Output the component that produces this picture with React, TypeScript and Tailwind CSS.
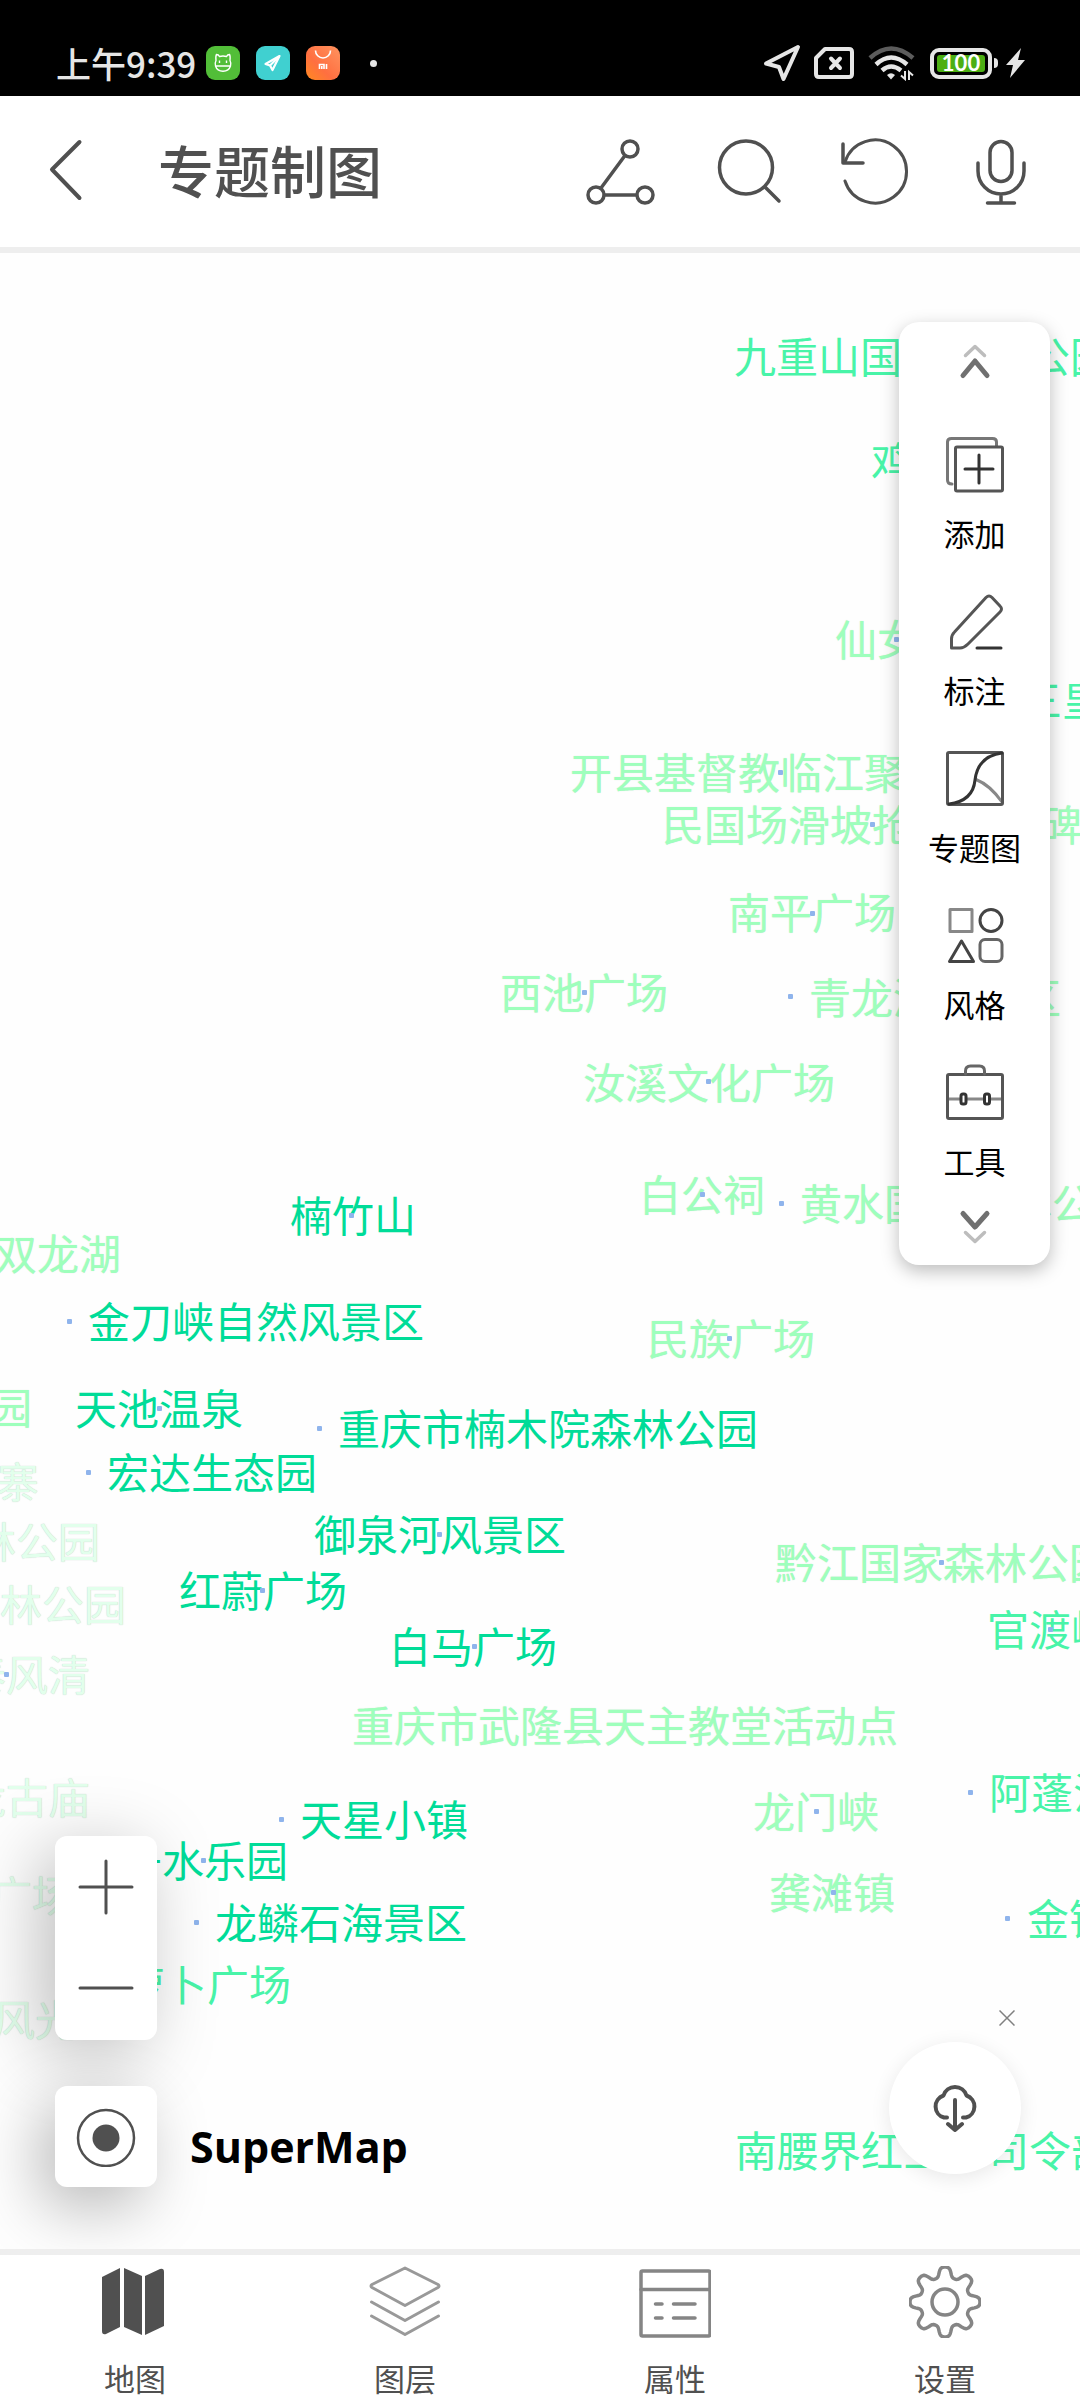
import React from "react";

type Tone = "dark" | "mid" | "light" | "pale";

type Place = {
  name: string;
  x: number;
  y: number;
  tone: Tone;
  dot?: [number, number];
};

const toneClass: Record<Tone, string> = {
  dark: "text-[#00dc98]",
  mid: "text-[#48f4a8]",
  light: "text-[#9effbc] [text-shadow:0_0_1px_#7aa88855]",
  pale: "text-[#e2ffec] [text-shadow:0_0_1px_#8fae9aaa]",
};

// Coordinates are measured from the top left corner of the map canvas;
// x is the left edge of the text and y is its vertical centre.
const places: Place[] = [
  { name: "九重山国家森林公园", x: 734, y: 104, tone: "mid" },
  { name: "鸡公山", x: 871, y: 209, tone: "mid" },
  { name: "仙女山", x: 835, y: 387, tone: "light", dot: [896, 386] },
  { name: "三皇庙", x: 1020, y: 447, tone: "mid" },
  { name: "开县基督教临江聚会点", x: 570, y: 520, tone: "light", dot: [780, 519] },
  { name: "民国场滑坡抢险纪念碑", x: 662, y: 572, tone: "light", dot: [872, 571] },
  { name: "南平广场", x: 728, y: 660, tone: "light", dot: [812, 660] },
  { name: "西池广场", x: 500, y: 740, tone: "light", dot: [584, 739] },
  { name: "青龙湖风景区", x: 809, y: 745, tone: "light", dot: [790, 743] },
  { name: "汝溪文化广场", x: 583, y: 830, tone: "light", dot: [708, 828] },
  { name: "白公祠", x: 639, y: 942, tone: "light", dot: [702, 941] },
  { name: "黄水国家森林公园", x: 800, y: 951, tone: "light", dot: [781, 950] },
  { name: "楠竹山", x: 290, y: 963, tone: "dark", dot: [351, 962] },
  { name: "双龙湖", x: -5, y: 1001, tone: "light" },
  { name: "金刀峡自然风景区", x: 88, y: 1069, tone: "dark", dot: [69, 1068] },
  { name: "民族广场", x: 647, y: 1086, tone: "light", dot: [729, 1085] },
  { name: "公园", x: -52, y: 1155, tone: "light" },
  { name: "天池温泉", x: 75, y: 1156, tone: "dark", dot: [159, 1155] },
  { name: "重庆市楠木院森林公园", x: 338, y: 1176, tone: "dark", dot: [319, 1175] },
  { name: "宏达生态园", x: 107, y: 1220, tone: "dark", dot: [88, 1219] },
  { name: "寨", x: -3, y: 1229, tone: "pale" },
  { name: "林公园", x: -26, y: 1289, tone: "pale" },
  { name: "御泉河风景区", x: 314, y: 1282, tone: "dark", dot: [439, 1281] },
  { name: "黔江国家森林公园", x: 775, y: 1310, tone: "light", dot: [941, 1309] },
  { name: "红蔚广场", x: 179, y: 1338, tone: "dark", dot: [262, 1337] },
  { name: "林公园", x: 0, y: 1352, tone: "pale" },
  { name: "官渡峡", x: 987, y: 1377, tone: "mid", dot: [1050, 1376] },
  { name: "白马广场", x: 389, y: 1394, tone: "dark", dot: [474, 1393] },
  { name: "山泰风清", x: -78, y: 1422, tone: "pale", dot: [6, 1421] },
  { name: "重庆市武隆县天主教堂活动点", x: 352, y: 1473, tone: "light" },
  { name: "阿蓬江", x: 989, y: 1540, tone: "mid", dot: [970, 1539] },
  { name: "龙古庙", x: -36, y: 1545, tone: "pale" },
  { name: "龙门峡", x: 753, y: 1559, tone: "light", dot: [816, 1558] },
  { name: "天星小镇", x: 300, y: 1567, tone: "dark", dot: [281, 1566] },
  { name: "丹水乐园", x: 120, y: 1608, tone: "dark", dot: [203, 1607] },
  { name: "龚滩镇", x: 769, y: 1640, tone: "light", dot: [833, 1639] },
  { name: "广场", x: -10, y: 1643, tone: "pale" },
  { name: "金银山", x: 1027, y: 1666, tone: "mid", dot: [1007, 1665] },
  { name: "龙鳞石海景区", x: 215, y: 1670, tone: "dark", dot: [196, 1669] },
  { name: "萝卜广场", x: 123, y: 1732, tone: "mid" },
  { name: "风光", x: -7, y: 1767, tone: "pale" },
  { name: "南腰界红三军司令部", x: 735, y: 1898, tone: "mid" },
];

function StatusBar() {
  return (
    <div className="flex h-24 shrink-0 items-center justify-between bg-black pt-[30px] pr-[55px] pl-[56px] text-[#e6e6e6]">
      <div className="flex items-center">
        <span className="text-[35px] leading-[34px] font-medium">上午9:39</span>
        <div className="ml-[10px] flex items-center gap-4">
          <svg width="34" height="34" viewBox="0 0 34 34" fill="none" stroke="#fff" strokeWidth="1.4">
            <rect width="34" height="34" rx="9" fill="#52be38" stroke="none" />
            <path d="M10 14.500Q9.500 10 10.500 8.500q2 0 3 2 3.500-1 7 0 1-2 3-2 1 1.500.5 6 1.500 3 .5 5.500a7.800 7.200 0 0 1-15 0q-1-2.500.5-5.500ZM9.500 20h15" />
            <path d="M13.500 14.500v2.500M20.500 14.500v2.500" />
          </svg>
          <svg width="34" height="34" viewBox="0 0 34 34" fill="none" stroke="#fff" strokeWidth="2.200" strokeLinejoin="round">
            <rect width="34" height="34" rx="9" fill="#40d0d0" stroke="none" />
            <path d="M23.500 10 9.500 18l4.500 1.500L16.500 24Z" />
            <path d="M23 10.500 14 19.500" />
          </svg>
          <svg width="34" height="34" viewBox="0 0 34 34" fill="none" stroke="#fff" strokeWidth="1.600">
            <defs>
              <linearGradient id="shopFill" x1="0" y1="1" x2="1" y2="0">
                <stop offset="0" stopColor="#ff8a20" />
                <stop offset=".4" stopColor="#ff6f40" />
                <stop offset="1" stopColor="#ff9460" />
              </linearGradient>
            </defs>
            <rect width="34" height="34" rx="9" fill="url(#shopFill)" stroke="none" />
            <path d="M9.500 4.500a7.500 7.500 0 0 0 15 0M13.500 23v-4.500h4.500V23M15.800 20v3M20.500 18v5" />
          </svg>
        </div>
        <span className="ml-[30px] size-[7px] rounded-full bg-[#e6e6e6]" />
      </div>
      <div className="flex items-center">
        <svg width="38" height="38" viewBox="0 0 38 38" fill="none" stroke="currentColor" strokeWidth="4" strokeLinejoin="round">
          <path d="M35 3 3 19.500l13 3.500L20.500 35Z" />
        </svg>
        <svg className="ml-[13px]" width="40" height="32" viewBox="0 0 40 32" fill="none" stroke="currentColor" strokeWidth="4" strokeLinejoin="round" strokeLinecap="round">
          <path d="M11 2h24q3 0 3 3v22q0 3-3 3H5q-3 0-3-3V11ZM17 11.500l9 9.500M26 11.500 17 21" />
        </svg>
        <svg className="ml-[14px]" width="48" height="36" viewBox="0 0 48 36" fill="none" stroke="currentColor" strokeWidth="4.500">
          <path d="M2 13Q23-6 45 13" stroke="#5c5c5c" />
          <path d="M8 19.500q15-14 31 0M14 25.500q9-8 19 0" />
          <path d="m19 30q4-3.500 8 0l-4 4.500Z" fill="currentColor" stroke="none" />
          <path d="M37 26v8l-4-3.500M41 35v-8l4 3.500" strokeWidth="2" />
        </svg>
        <div className="ml-[14px] flex h-[31px] w-[62px] rounded-[9px] border-4 border-[#e6e6e6] p-[3px]">
          <span className="flex flex-1 items-center justify-center rounded-[3px] bg-[#4caf13] font-[Lato] text-[22px] leading-none font-bold text-white">
            100
          </span>
        </div>
        <span className="ml-0.5 h-[10px] w-1 rounded-r-sm bg-[#e6e6e6]" />
        <svg className="ml-2" width="19" height="30" viewBox="0 0 19 30" fill="currentColor">
          <path d="M15 0 0 17h7L4 30 19 12h-7Z" />
        </svg>
      </div>
    </div>
  );
}

function Header() {
  return (
    <header className="flex h-[157px] shrink-0 items-center border-b-6 border-[#eeeeee] bg-white text-[#505050]">
      <button aria-label="返回" className="ml-[46px] pb-1">
        <svg width="40" height="64" viewBox="0 0 40 64" fill="none" stroke="currentColor" strokeWidth="4" strokeLinecap="round" strokeLinejoin="round">
          <path d="M33.500 4 6 31.500 33.500 60" />
        </svg>
      </button>
      <h1 className="ml-[72px] flex-1 pb-1.5 text-[56px] leading-[60px] font-medium">专题制图</h1>
      <div className="flex items-center gap-[55px] pr-[43px]">
        <button aria-label="分析">
          <svg width="72" height="72" viewBox="0 0 72 72" fill="none" stroke="currentColor" strokeWidth="3.500">
            <circle cx="46" cy="13" r="8" />
            <circle cx="12" cy="59" r="8" />
            <circle cx="61" cy="59" r="8" />
            <path d="M41 19.500 17 52M20 59h33" />
          </svg>
        </button>
        <button aria-label="搜索">
          <svg width="72" height="72" viewBox="0 0 72 72" fill="none" stroke="currentColor" strokeWidth="3.500" strokeLinecap="round">
            <circle cx="35" cy="31.500" r="26.500" />
            <path d="M54 51 68 65" />
          </svg>
        </button>
        <button aria-label="撤销">
          <svg width="72" height="72" viewBox="0 0 72 72" fill="none" stroke="currentColor" strokeWidth="3.500" strokeLinecap="round" strokeLinejoin="round">
            <path d="M7 26A31.500 31.500 0 1 1 7 45" strokeWidth="3" />
            <path d="M5 8v19h20" />
          </svg>
        </button>
        <button aria-label="语音">
          <svg width="72" height="72" viewBox="0 0 72 72" fill="none" stroke="currentColor" strokeWidth="3.500" strokeLinecap="round">
            <rect x="25" y="5.500" width="22" height="40" rx="11" />
            <path d="M13 27v8a23 23 0 0 0 46 0v-8M36 58v9M22.500 67h27" />
          </svg>
        </button>
      </div>
    </header>
  );
}

const tools: { label: string; icon: React.ReactNode }[] = [
  {
    label: "添加",
    icon: (
      <>
        <path d="M7 50q-4.500 0-4.500-4V8q0-3.500 4-3.500h41q4 0 4 3.500v4" stroke="#777" />
        <rect x="10.500" y="13" width="47" height="44" rx="1.500" stroke="#555" />
        <path d="M34 21v28M20 35h28" stroke="#333" />
      </>
    ),
  },
  {
    label: "标注",
    icon: (
      <>
        <path d="M6.500 57V48q0-4 3-7L41 6.500q3-3 6 0L55 15q3 3 0 6L23 53q-4 4-8 4Z" stroke="#555" />
        <path d="M32 57h24" stroke="#333" />
      </>
    ),
  },
  {
    label: "专题图",
    icon: (
      <>
        <path d="M31 31.500Q45 37 57 54" stroke="#888" />
        <rect x="2.500" y="4.500" width="55" height="52" rx="1.500" stroke="#555" />
        <path d="M4 56Q28 53 30 32 33 8 57 5" stroke="#333" />
      </>
    ),
  },
  {
    label: "风格",
    icon: (
      <>
        <rect x="5" y="4.500" width="22" height="22" stroke="#888" />
        <circle cx="46" cy="15.500" r="11" stroke="#444" />
        <path d="M16.500 36 4.500 56.500h24Z" stroke="#444" />
        <rect x="35" y="34.500" width="22" height="22" rx="5" stroke="#666" />
      </>
    ),
  },
  {
    label: "工具",
    icon: (
      <>
        <path d="M2.500 37h55" stroke="#888" />
        <rect x="2.500" y="12.500" width="55" height="44" rx="1.500" stroke="#555" />
        <path d="M20.500 12V9q0-5 5-5h9q5 0 5 5v3" stroke="#666" />
        <rect x="16" y="32" width="5" height="10" rx="2" stroke="#333" fill="#fff" />
        <rect x="39.500" y="32" width="5" height="10" rx="2" stroke="#333" fill="#fff" />
      </>
    ),
  },
];

function ToolPanel() {
  return (
    <div className="absolute top-[69px] right-[30px] flex w-[151px] flex-col items-center rounded-[20px] bg-white pt-[19px] pb-[18px] shadow-[0_6px_18px_rgba(0,0,0,0.26)]">
      <button aria-label="向上">
        <svg width="40" height="40" viewBox="0 0 40 40" fill="none" strokeLinecap="round" strokeLinejoin="round">
          <path d="M10.500 14.500 20 5.500l9.500 9" stroke="#bdbdbd" strokeWidth="3.500" />
          <path d="M8 34.500 20 20l12 14.500" stroke="#707070" strokeWidth="5" />
        </svg>
      </button>
      <div className="mt-[53px] mb-[26px] flex flex-col items-center gap-[38px]">
        {tools.map((tool) => (
          <button key={tool.label} className="flex flex-col items-center gap-[19px]">
            <svg width="60" height="60" viewBox="0 0 60 60" fill="none" strokeWidth="3" strokeLinecap="round" strokeLinejoin="round">
              {tool.icon}
            </svg>
            <span className="text-[31px] leading-[40px] text-black">{tool.label}</span>
          </button>
        ))}
      </div>
      <button aria-label="向下">
        <svg width="40" height="40" viewBox="0 0 40 40" fill="none" strokeLinecap="round" strokeLinejoin="round">
          <path d="M8 6.500 20 20 32 6.500" stroke="#707070" strokeWidth="5" />
          <path d="M10.500 25.500 20 34.500l9.500-9" stroke="#bdbdbd" strokeWidth="3.500" />
        </svg>
      </button>
    </div>
  );
}

function MapControls() {
  return (
    <div className="absolute bottom-[62px] left-[55px] flex items-end text-[#505050]">
      <div className="flex w-[102px] flex-col gap-[46px]">
        <div className="flex h-[204px] flex-col rounded-xl bg-white shadow-[-14px_14px_72px_rgba(0,0,0,0.26)]">
          <button aria-label="放大" className="flex flex-1 items-center justify-center">
            <svg width="60" height="60" viewBox="0 0 60 60" stroke="currentColor" strokeWidth="3" strokeLinecap="round">
              <path d="M30 4v52M4 30h52" />
            </svg>
          </button>
          <button aria-label="缩小" className="flex flex-1 items-center justify-center">
            <svg width="60" height="60" viewBox="0 0 60 60" stroke="currentColor" strokeWidth="3" strokeLinecap="round">
              <path d="M4 29h52" />
            </svg>
          </button>
        </div>
        <button
          aria-label="定位"
          className="flex h-[101px] items-center justify-center rounded-xl bg-white shadow-[-14px_20px_64px_rgba(0,0,0,0.28)]"
        >
          <svg width="60" height="60" viewBox="0 0 60 60" fill="none">
            <circle cx="30" cy="31" r="28" stroke="currentColor" strokeWidth="2.500" />
            <circle cx="30" cy="31" r="13.500" fill="currentColor" />
          </svg>
        </button>
      </div>
      <span className="mb-[14px] ml-[33px] font-['Open_Sans'] text-[43px] leading-[52px] font-bold text-black">SuperMap</span>
    </div>
  );
}

function DownloadBubble() {
  return (
    <>
      <button aria-label="关闭" className="absolute right-[61px] bottom-[219px] p-1">
        <svg width="16" height="16" viewBox="0 0 16 16" stroke="#808080" strokeWidth="1.500">
          <path d="m.5.5 15 15M15.500.5l-15 15" />
        </svg>
      </button>
      <button
        aria-label="下载"
        className="absolute right-[59px] bottom-[75px] flex size-[132px] items-center justify-center rounded-full bg-white text-[#505050] shadow-[0_4px_20px_rgba(0,0,0,0.09)]"
      >
        <svg width="52" height="48" viewBox="0 0 52 48" fill="none" stroke="currentColor" strokeWidth="4" strokeLinecap="round" strokeLinejoin="round">
          <path d="M18 33.500H15A11.500 11.500 0 0 1 14.500 11.500A12 12 0 0 1 37.500 11.500A11.500 11.500 0 0 1 37 33.500H34" />
          <path d="M26 16v29M19 40l7 6 7-6" />
        </svg>
      </button>
    </>
  );
}

function MapCanvas() {
  return (
    <main className="relative flex-1 overflow-hidden bg-[#fefefe]">
      {places.map((p, i) => (
        <React.Fragment key={i}>
          <span
            className={`absolute text-[42px] leading-[42px] whitespace-nowrap ${toneClass[p.tone]}`}
            style={{ left: p.x, top: p.y - 23 }}
          >
            {p.name}
          </span>
          {p.dot && (
            <span
              className="absolute size-[5px] rounded-[1px] bg-[#8fb4ec]"
              style={{ left: p.dot[0] - 2, top: p.dot[1] - 2 }}
            />
          )}
        </React.Fragment>
      ))}
      <ToolPanel />
      <MapControls />
      <DownloadBubble />
    </main>
  );
}

const gearPath =
  Array.from({ length: 160 }, (_, i) => {
    const a = (i / 160) * Math.PI * 2;
    const r = 30 + 5 * (Math.tanh(1.6 * Math.cos(8 * a)) / Math.tanh(1.6));
    return `${i ? "L" : "M"}${(36 + r * Math.sin(a)).toFixed(2)} ${(36 - r * Math.cos(a)).toFixed(2)}`;
  }).join("") + "Z";

const tabs: { label: string; icon: React.ReactNode }[] = [
  {
    label: "地图",
    icon: (
      <g fill="#505050">
        <path d="M3 11 21 2v59L7 68q-4 1-4-3Z" />
        <path d="M25 2 43 10v59L25 61Z" />
        <path d="M46 10 61 3q4-1 4 3v54L46 69Z" />
      </g>
    ),
  },
  {
    label: "图层",
    icon: (
      <g stroke="#999999" strokeWidth="3">
        <path d="M36 2 69 18.500q2 1.500 0 3L36 39.500 3 21.500q-2-1.500 0-3Z" />
        <path d="M2.500 36 36 54.500 69.500 36M2.500 50 36 68.500 69.500 50" />
      </g>
    ),
  },
  {
    label: "属性",
    icon: (
      <g stroke="#858585" strokeWidth="3.500">
        <rect x="2" y="5" width="69" height="65" rx="1.500" />
        <path d="M2 23.500h69M16.500 38h6.500M34.500 38H56M16.500 52h6.500M34.500 52H56" />
      </g>
    ),
  },
  {
    label: "设置",
    icon: (
      <g stroke="#858585" strokeWidth="3.500">
        <path d={gearPath} />
        <circle cx="36" cy="36" r="13" />
      </g>
    ),
  },
];

function TabBar() {
  return (
    <nav className="grid shrink-0 grid-cols-4 border-t-6 border-[#eeeeee] bg-white pt-[11px] pb-0.5">
      {tabs.map((tab) => (
        <button key={tab.label} className="flex flex-col items-center gap-5 text-[#505050]">
          <svg width="72" height="72" viewBox="0 0 72 72" fill="none" strokeLinecap="round" strokeLinejoin="round">
            {tab.icon}
          </svg>
          <span className="text-[31px] leading-[40px]">{tab.label}</span>
        </button>
      ))}
    </nav>
  );
}

export default function App() {
  return (
    <div className="flex min-h-screen flex-col bg-white font-['Noto_Sans_CJK_SC',sans-serif]">
      <StatusBar />
      <Header />
      <MapCanvas />
      <TabBar />
    </div>
  );
}
